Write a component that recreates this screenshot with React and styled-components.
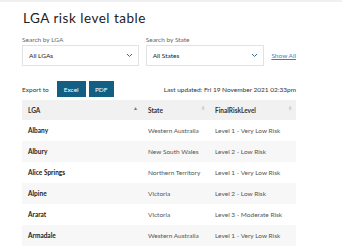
import React from 'react'
import styled, { createGlobalStyle } from 'styled-components'

const Global = createGlobalStyle`
  body {
    margin: 0;
    background: #fff;
    font-family: Lato, 'Open Sans', sans-serif;
    color: #333;
  }
`

const Page = styled.div`
  border-top: 2px solid #f0f0f0;
  padding: 0 46px 0 22px;
  width: 274px;
`

const Title = styled.h1`
  margin: 6px 0 0 1px;
  font-size: 13.5px;
  line-height: 20px;
  font-weight: 400;
  letter-spacing: 0.5px;
  color: #222;
`

const Filters = styled.div`
  display: flex;
  align-items: flex-end;
  margin-top: 7px;
`

const Field = styled.div`
  display: flex;
  flex-direction: column;
  width: ${p => p.width}px;
  margin-right: 7px;
`

const Label = styled.label`
  font-size: 6.5px;
  line-height: 9px;
  color: #666;
  margin-bottom: 1px;
`

const Select = styled.div`
  height: 21px;
  box-sizing: border-box;
  border: 1px solid #e2e2e2;
  display: flex;
  align-items: center;
  justify-content: space-between;
  padding: 0 5px 0 6px;
  font-size: 6.5px;
  color: #222;
`

const ShowAll = styled.a`
  font-size: 6.5px;
  color: #3e7fc1;
  text-decoration: underline;
  line-height: 21px;
  white-space: nowrap;
`

const ExportRow = styled.div`
  display: flex;
  align-items: center;
  margin-top: 15px;
  height: 16px;
`

const ExportLabel = styled.span`
  font-size: 6.5px;
  color: #333;
  margin-right: 8px;
`

const Button = styled.button`
  height: 16px;
  width: ${p => p.width}px;
  border: none;
  padding: 0;
  margin-right: 3px;
  background: #135f84;
  color: #fff;
  font-family: inherit;
  font-size: 6.5px;
`

const Updated = styled.span`
  margin-left: auto;
  font-size: 6.5px;
  color: #333;
  white-space: nowrap;
`

const Table = styled.table`
  margin-top: 3px;
  width: 274px;
  border-collapse: collapse;
  font-size: 6.5px;
`

const Th = styled.th`
  background: #f1f1f1;
  height: 20px;
  text-align: left;
  font-weight: 700;
  color: #333;
  padding: 0 0 0 6px;
  width: ${p => p.width}px;
  position: relative;
`

const Sort = styled.span`
  position: absolute;
  right: 4px;
  top: 6px;
  font-size: 5px;
  color: ${p => (p.active ? '#777' : '#ccc')};
  line-height: 4px;
  display: flex;
  flex-direction: column;
`

const Tr = styled.tr`
  background: ${p => (p.striped ? '#f7f7f7' : '#fff')};
`

const Td = styled.td`
  height: 21px;
  padding: 0 0 0 6px;
  font-weight: ${p => (p.bold ? 700 : 400)};
  color: ${p => (p.bold ? '#222' : '#555')};
`

const Chevron = () => (
  <svg width="7" height="5" viewBox="0 0 7 5">
    <path d="M1 1l2.5 2.5L6 1" fill="none" stroke="#2f6f99" strokeWidth="1" />
  </svg>
)

const rows = [
  ['Albany', 'Western Australia', 'Level 1 - Very Low Risk'],
  ['Albury', 'New South Wales', 'Level 2 - Low Risk'],
  ['Alice Springs', 'Northern Territory', 'Level 1 - Very Low Risk'],
  ['Alpine', 'Victoria', 'Level 2 - Low Risk'],
  ['Ararat', 'Victoria', 'Level 3 - Moderate Risk'],
  ['Armadale', 'Western Australia', 'Level 1 - Very Low Risk'],
]

const App = () => {
  return (
    <Page>
      <Global />
      <Title>LGA risk level table</Title>
      <Filters>
        <Field width={118}>
          <Label>Search by LGA</Label>
          <Select>All LGAs<Chevron /></Select>
        </Field>
        <Field width={120}>
          <Label>Search by State</Label>
          <Select>All States<Chevron /></Select>
        </Field>
        <ShowAll>Show All</ShowAll>
      </Filters>
      <ExportRow>
        <ExportLabel>Export to</ExportLabel>
        <Button width={29}>Excel</Button>
        <Button width={25}>PDF</Button>
        <Updated>Last updated: Fri 19 November 2021 02:33pm</Updated>
      </ExportRow>
      <Table>
        <thead>
          <tr>
            <Th width={114}>LGA<Sort active>▲</Sort></Th>
            <Th width={61}>State<Sort>⬍</Sort></Th>
            <Th>FinalRiskLevel<Sort>⬍</Sort></Th>
          </tr>
        </thead>
        <tbody>
          {rows.map((r, i) => (
            <Tr key={r[0]} striped={i % 2 === 1}>
              <Td bold>{r[0]}</Td>
              <Td>{r[1]}</Td>
              <Td>{r[2]}</Td>
            </Tr>
          ))}
        </tbody>
      </Table>
    </Page>
  )
}

export default App
